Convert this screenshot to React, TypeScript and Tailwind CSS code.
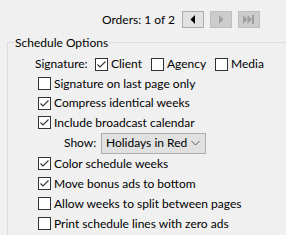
import React from "react";

const Check = ({ checked }: { checked?: boolean }) => (
  <span className="w-[13px] h-[13px] border border-[#333333] bg-white flex items-center justify-center shrink-0">
    {checked && (
      <svg width="11" height="11" viewBox="0 0 11 11">
        <polyline points="1.5,5.5 4,8 9.5,2.5" fill="none" stroke="#333333" strokeWidth="1.1" />
      </svg>
    )}
  </span>
);

const Row = ({ label, checked, tall }: { label: string; checked?: boolean; tall?: boolean }) => (
  <div className={`flex items-center pl-[30px] gap-[3px] whitespace-nowrap ${tall ? "h-[20px]" : "h-[19.5px]"}`}>
    <Check checked={checked} />
    <span>{label}</span>
  </div>
);

export default function App() {
  return (
    <div
      className="w-[286px] h-[235px] bg-[#f0f0f0] overflow-hidden text-[12px] text-black leading-none"
      style={{ fontFamily: 'Lato, sans-serif' }}
    >
      <div className="flex items-center justify-end h-[17px] mt-[11px] pr-[26px]">
        <span className="mr-[7px]">Orders: 1 of 2</span>
        <div className="w-[22px] h-[17px] border border-[#adadad] bg-[#e1e1e1] flex items-center justify-center">
          <svg width="6" height="9" viewBox="0 0 6 9">
            <polygon points="5,0 5,9 0.5,4.5" fill="#000" />
          </svg>
        </div>
        <div className="ml-[6px] w-[22px] h-[17px] border border-[#bfbfbf] bg-[#cccccc] flex items-center justify-center">
          <svg width="6" height="9" viewBox="0 0 6 9">
            <polygon points="1,0 1,9 5.5,4.5" fill="#a0a0a0" />
          </svg>
        </div>
        <div className="ml-[6px] w-[22px] h-[17px] border border-[#bfbfbf] bg-[#cccccc] flex items-center justify-center">
          <svg width="12" height="9" viewBox="0 0 12 9">
            <polygon points="0,0 0,9 4.5,4.5" fill="#a0a0a0" />
            <polygon points="4.5,0 4.5,9 9,4.5" fill="#a0a0a0" />
            <rect x="9" y="0" width="2" height="9" fill="#a0a0a0" />
          </svg>
        </div>
      </div>
      <div className="relative ml-[7px] mt-[14px] border-t border-l border-[#dcdcdc] h-[300px]">
        <span className="absolute left-[6px] top-[-8px] bg-[#f0f0f0] px-[1px] leading-[15px] whitespace-nowrap">Schedule Options</span>
        <div className="pt-[11px]">
          <div className="flex items-center h-[20px] pl-[27px] whitespace-nowrap">
            <span className="w-[60px]">Signature:</span>
            <Check checked />
            <span className="ml-[3px] w-[40px]">Client</span>
            <Check />
            <span className="ml-[3px] w-[48px]">Agency</span>
            <Check />
            <span className="ml-[3px]">Media</span>
          </div>
          <Row label="Signature on last page only" />
          <Row label="Compress identical weeks" checked />
          <Row label="Include broadcast calendar" checked />
          <div className="flex items-center h-[21px] pl-[56px] whitespace-nowrap">
            <span className="w-[37px]">Show:</span>
            <div className="w-[105px] h-[21px] border border-[#adadad] bg-[#e1e1e1] flex items-center pl-[4px] pr-[5px] justify-between">
              <span>Holidays in Red</span>
              <svg width="9" height="6" viewBox="0 0 9 6">
                <polyline points="0.5,1 4.5,5 8.5,1" fill="none" stroke="#606060" strokeWidth="1" />
              </svg>
            </div>
          </div>
          <Row label="Color schedule weeks" checked tall />
          <Row label="Move bonus ads to bottom" checked tall />
          <Row label="Allow weeks to split between pages" tall />
          <Row label="Print schedule lines with zero ads" tall />
        </div>
      </div>
    </div>
  );
}
